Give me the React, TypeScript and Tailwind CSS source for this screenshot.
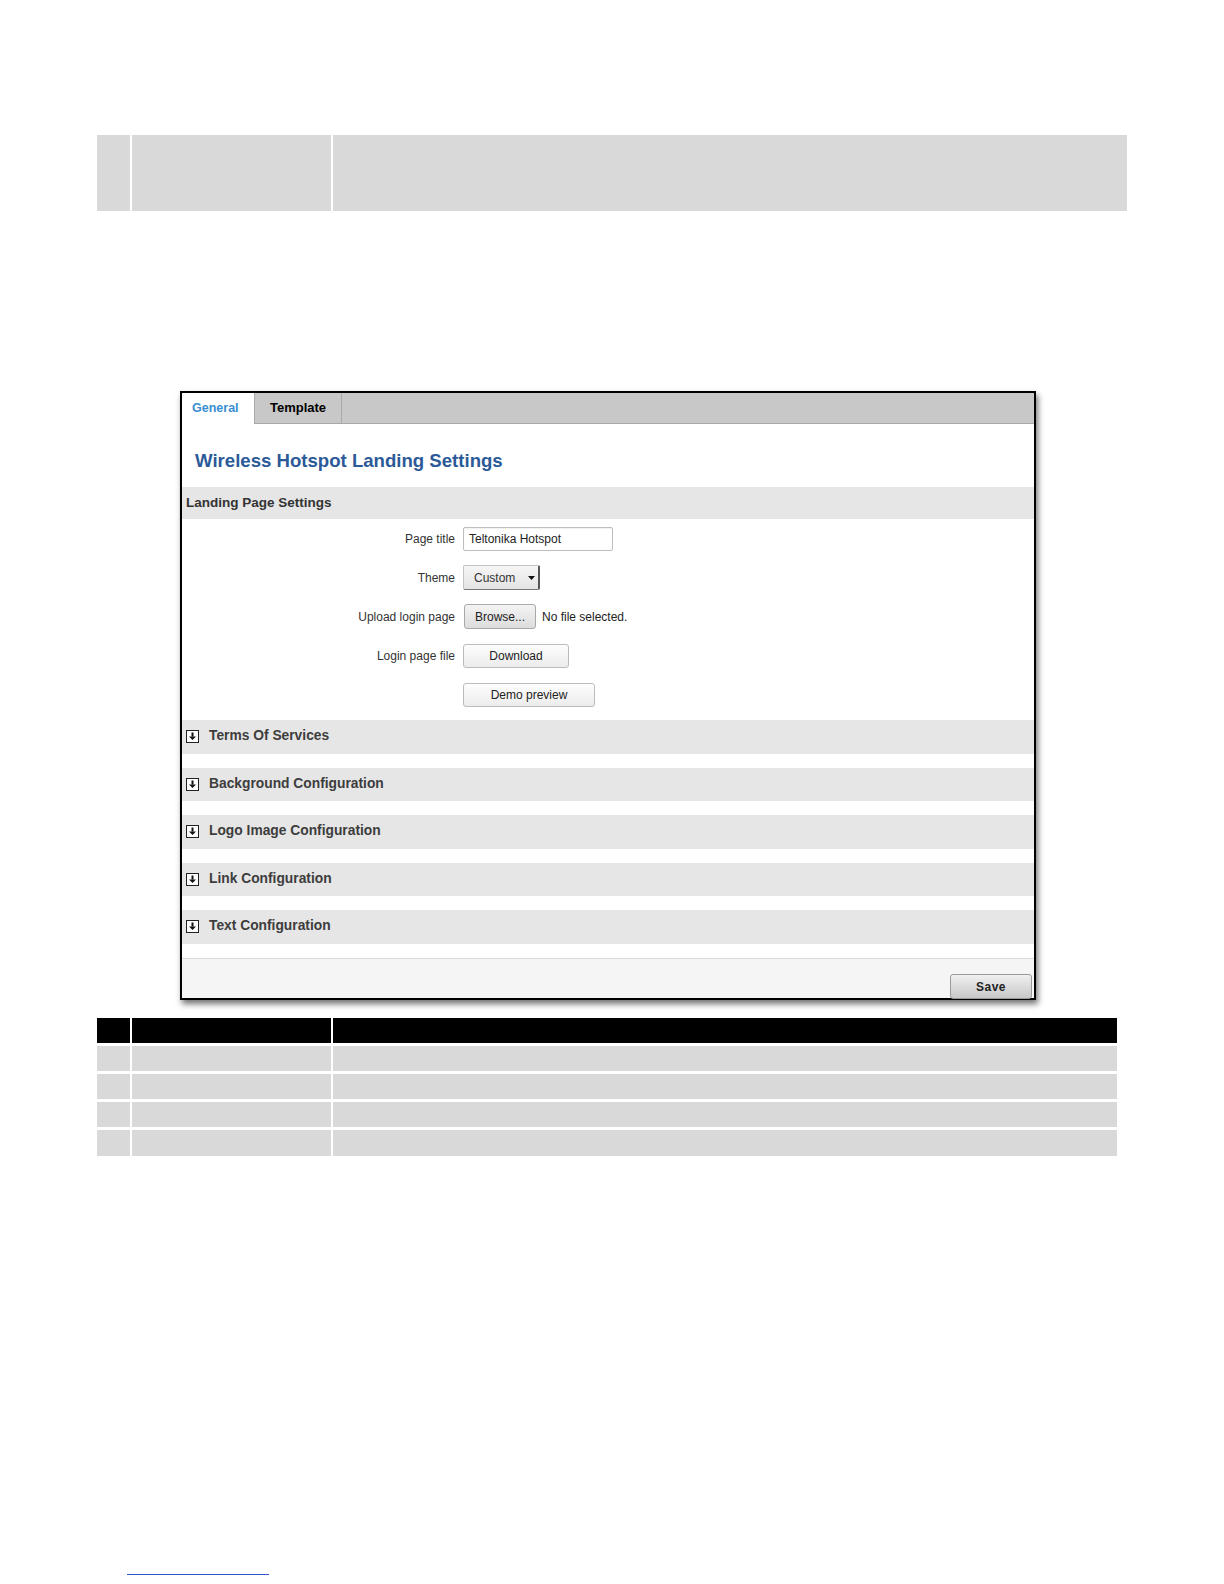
import React from "react";

const font = { fontFamily: '"Liberation Sans", Arial, sans-serif' };

const sections = [
  "Terms Of Services",
  "Background Configuration",
  "Logo Image Configuration",
  "Link Configuration",
  "Text Configuration",
];

function ExpandIcon() {
  return (
    <svg width="13" height="13" viewBox="0 0 13 13" className="shrink-0">
      <rect x="0.5" y="0.5" width="12" height="12" fill="#fff" stroke="#222" />
      <rect x="5.5" y="2.5" width="2" height="4" fill="#111" />
      <path d="M3 6.5 L10 6.5 L6.5 10 Z" fill="#111" />
    </svg>
  );
}

function FormRow({ label, children }: { label?: string; children: React.ReactNode }) {
  return (
    <div className="flex h-[39px] items-center">
      <div className="w-[273px] text-right text-[12px] text-[#333]">{label}</div>
      <div className="ml-[8px] flex items-center">{children}</div>
    </div>
  );
}

function GrayTable({ rows }: { rows: { h: string; dark?: boolean }[] }) {
  return (
    <div className="flex flex-col gap-[3px]">
      {rows.map((r, i) => (
        <div key={i} className={`grid grid-cols-[33px_199px_1fr] gap-[2px] ${r.h}`}>
          <div className={r.dark ? "bg-black" : "bg-[#d9d9d9]"} />
          <div className={r.dark ? "bg-black" : "bg-[#d9d9d9]"} />
          <div className={r.dark ? "bg-black" : "bg-[#d9d9d9]"} />
        </div>
      ))}
    </div>
  );
}

export default function App() {
  return (
    <div className="relative h-[1584px] w-[1224px] overflow-hidden bg-white" style={font}>
      {/* top table fragment */}
      <div className="ml-[97px] w-[1030px] pt-[135px]">
        <GrayTable rows={[{ h: "h-[76px]" }]} />
      </div>

      {/* screenshot frame */}
      <div className="ml-[180px] mt-[180px] w-[856px] border-2 border-black bg-white shadow-[2px_4px_6px_rgba(0,0,0,0.55)]">
        {/* tabs */}
        <div className="flex h-[31px] border-b border-[#a8a8a8] bg-[#c8c8c8]">
          <div className="-mb-px flex w-[72px] items-center bg-white pl-[10px] text-[12.5px] font-bold text-[#3a8ed2]">
            General
          </div>
          <div className="flex w-[88px] items-center justify-center border-x border-[#aaa] text-[13px] font-bold text-black">
            Template
          </div>
        </div>

        {/* title */}
        <div className="flex h-[63px] items-center pl-[13px] pt-[10px] text-[18.6px] font-bold text-[#2c5a98]">
          Wireless Hotspot Landing Settings
        </div>

        {/* section header */}
        <div className="flex h-[32px] items-center bg-[#e6e6e6] pl-[4px] text-[13.5px] font-bold text-[#333]">
          Landing Page Settings
        </div>

        {/* form */}
        <div className="flex flex-col">
          <FormRow label="Page title">
            <div className="flex h-[24px] w-[150px] items-center rounded-[2px] border border-[#bdbdbd] bg-white pl-[5px] text-[12px] text-[#222] shadow-[inset_0_1px_1px_rgba(0,0,0,0.06)]">
              Teltonika Hotspot
            </div>
          </FormRow>
          <FormRow label="Theme">
            <div className="flex h-[25px] w-[77px] items-center justify-between rounded-[2px] border border-[#c4c4c4] border-b-[#777] border-r-2 border-r-[#555] bg-gradient-to-b from-[#f6f6f6] to-[#e4e4e4] pl-[10px] pr-[3px] text-[12px] text-[#333]">
              <span>Custom</span>
              <svg width="7" height="4" viewBox="0 0 7 4">
                <path d="M0 0 L7 0 L3.5 4 Z" fill="#111" />
              </svg>
            </div>
          </FormRow>
          <FormRow label="Upload login page">
            <div className="ml-[1px] flex h-[25px] w-[72px] items-center justify-center rounded-[3px] border border-[#a9a9a9] bg-gradient-to-b from-[#f4f4f4] to-[#dcdcdc] text-[12px] text-[#222]">
              Browse...
            </div>
            <span className="ml-[6px] text-[12px] text-[#222]">No file selected.</span>
          </FormRow>
          <FormRow label="Login page file">
            <div className="flex h-[24px] w-[106px] items-center justify-center rounded-[3px] border border-[#bcbcbc] bg-gradient-to-b from-[#fdfdfd] to-[#ececec] text-[12px] text-[#222]">
              Download
            </div>
          </FormRow>
          <FormRow>
            <div className="flex h-[24px] w-[132px] items-center justify-center rounded-[3px] border border-[#bcbcbc] bg-gradient-to-b from-[#fdfdfd] to-[#ececec] text-[12px] text-[#222]">
              Demo preview
            </div>
          </FormRow>
        </div>

        {/* collapsed sections */}
        <div className="mt-[6px] flex flex-col gap-[14px]">
          {sections.map((s) => (
            <div key={s} className="flex h-[33.5px] items-center bg-[#e6e6e6] pl-[4px]">
              <ExpandIcon />
              <span className="ml-[10px] text-[13.8px] font-bold text-[#3d3d3d]">{s}</span>
            </div>
          ))}
        </div>

        {/* footer */}
        <div className="mt-[14.5px] flex h-[40px] justify-end border-t border-[#dcdcdc] bg-[#f5f5f5] pr-[2px] pt-[15px]">
          <div className="flex h-[25px] w-[82px] items-center justify-center rounded-[3px] border border-[#999] bg-gradient-to-b from-[#f0f0f0] to-[#c8c8c8] text-[12px] font-bold tracking-[0.5px] text-[#222]">
            Save
          </div>
        </div>
      </div>

      {/* bottom table fragment */}
      <div className="ml-[97px] mt-[18px] w-[1020px]">
        <GrayTable
          rows={[
            { h: "h-[25px]", dark: true },
            { h: "h-[25px]" },
            { h: "h-[25px]" },
            { h: "h-[25px]" },
            { h: "h-[26px]" },
          ]}
        />
      </div>

      {/* footer link underline */}
      <div className="absolute left-[127px] top-[1574px] h-px w-[142px] bg-[#2f55c8]" />
    </div>
  );
}
